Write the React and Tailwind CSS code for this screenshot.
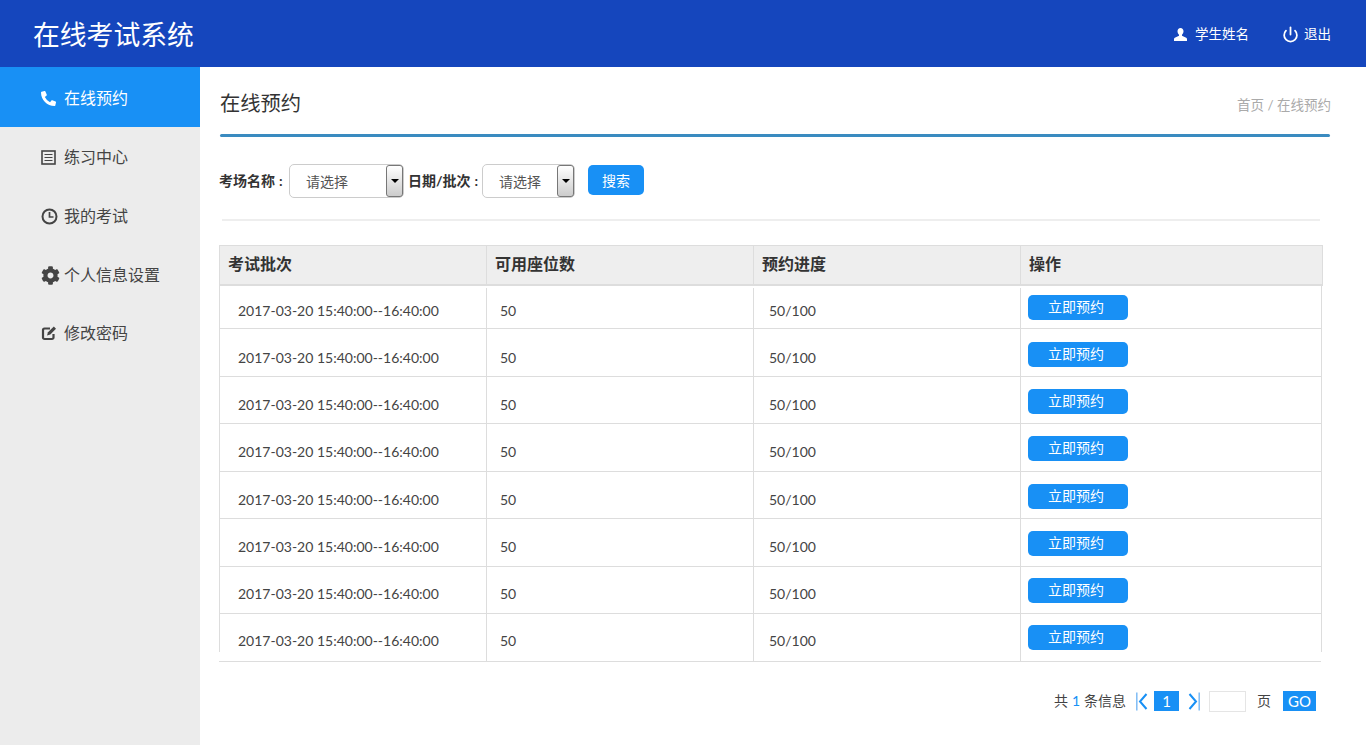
import React from "react";
import { FaCog, FaPhoneAlt } from "react-icons/fa";
import { Power } from "lucide-react";

// row heights and cell offsets follow the reference's pixel rounding
const rows = [
  { h: "h-[41px]", text: "pt-[13px]", btn: "pt-[7px]" },
  { h: "h-[48px]", text: "pt-[19px]", btn: "pt-[13px]" },
  { h: "h-[47px]", text: "pt-[18px]", btn: "pt-[12px]" },
  { h: "h-[48px]", text: "pt-[18px]", btn: "pt-[12px]" },
  { h: "h-[47px]", text: "pt-[18px]", btn: "pt-[12px]" },
  { h: "h-[48px]", text: "pt-[18px]", btn: "pt-[12px]" },
  { h: "h-[47px]", text: "pt-[17px]", btn: "pt-[11px]" },
  { h: "h-[48px]", text: "pt-[17px]", btn: "pt-[11px]" },
];

function ListIcon() {
  return (
    <svg className="shrink-0" width="15" height="15" viewBox="0 0 15 15" fill="none" stroke="#444">
      <rect x="1" y="1" width="13" height="13" strokeWidth="1.6" />
      <path d="M3.5 4.5h8M3.5 7.5h8M3.5 10.5h8" strokeWidth="1.2" />
    </svg>
  );
}

function ClockIcon() {
  return (
    <svg className="shrink-0" width="17" height="17" viewBox="0 0 17 17" fill="none" stroke="#444" strokeWidth="2">
      <circle cx="8.5" cy="8.5" r="7" />
      <path d="M8.500 4v5h4" strokeWidth="1.700" />
    </svg>
  );
}

function EditIcon() {
  return (
    <svg className="shrink-0" width="16" height="16" viewBox="0 0 16 16" fill="none">
      <path d="M12.500 9v3.500a1.500 1.500 0 0 1-1.500 1.500H3.500A1.500 1.500 0 0 1 2 12.500V5a1.500 1.500 0 0 1 1.500-1.500H9" stroke="#444" strokeWidth="2.200" />
      <path d="M6 10.500l1-3.300L12.800 1.500 15 3.700 9.300 9.500z" fill="#444" />
    </svg>
  );
}

function UserIcon() {
  return (
    <svg className="shrink-0" width="13" height="13" viewBox="0 0 13 13" fill="white">
      <path d="M6.500 0C4.700 0 3.500 1.400 3.500 3.300c0 1.500.7 2.800 1.500 3.500v1L.8 9.800C.3 10.100 0 10.600 0 11.200V13h13v-1.800c0-.6-.3-1.100-.8-1.400L8 7.800v-1c.8-.7 1.500-2 1.500-3.500C9.500 1.400 8.300 0 6.500 0z" />
    </svg>
  );
}

function NavItem({ icon, label, active, className }) {
  return (
    <div className={`flex items-center pl-[41px] gap-[8px] text-[16px] ${active ? "h-[60px] bg-[#1890f5] pt-[2px] text-white" : "text-[#444]"} ${className || ""}`}>
      <span className="flex w-[15px] justify-start">{icon}</span>
      <span>{label}</span>
    </div>
  );
}

function Select({ width, textWidth }) {
  return (
    <div className={`flex h-[34px] items-stretch rounded-[5px] border border-[#ccc] bg-white ${width}`}>
      <span className={`flex items-center pl-[16px] text-[14px] text-[#555] ${textWidth}`}>请选择</span>
      <span className="flex w-[17px] items-center justify-center rounded-[3px] border border-[#777] bg-gradient-to-b from-white to-[#ccc]">
        <span className="h-0 w-0 border-x-[4px] border-t-[4px] border-x-transparent border-t-black" />
      </span>
    </div>
  );
}

function Row({ row }) {
  return (
    <div className={`-ml-px grid grid-cols-[267px_267px_267px_1fr] border-b border-[#ddd] pl-px text-[14px] leading-[20px] text-[#444] ${row.h}`}>
      <div className={`border-r border-[#ddd] pl-[18px] ${row.text}`}>2017-03-20 15:40:00--16:40:00</div>
      <div className={`border-r border-[#ddd] pl-[13px] ${row.text}`}>50</div>
      <div className={`border-r border-[#ddd] pl-[15px] ${row.text}`}>50/100</div>
      <div className={`pl-[7px] ${row.btn}`}>
        <button className="h-[25px] w-[100px] rounded-[5px] bg-[#1890f5] pr-[4px] pb-[2px] text-[14px] text-white">立即预约</button>
      </div>
    </div>
  );
}

export default function App() {
  return (
    <div className="flex h-[745px] flex-col overflow-hidden bg-white font-['Lato','Noto_Sans_CJK_SC',sans-serif] text-[#333]">
      <header className="flex h-[67px] items-center justify-between bg-[#1546bd] pl-[33px] pr-[35px] text-white">
        <div className="mt-[4px] text-[26.8px]">在线考试系统</div>
        <div className="flex items-center pt-[2px] text-[13.5px]">
          <UserIcon />
          <span className="ml-[8px]">学生姓名</span>
          <Power className="ml-[33px]" size={17} strokeWidth={2.5} />
          <span className="ml-[5px]">退出</span>
        </div>
      </header>

      <div className="flex flex-1">
        <aside className="w-[200px] bg-[#ececec]">
          <NavItem active icon={<FaPhoneAlt className="text-[15px]" />} label="在线预约" />
          <NavItem className="mt-[19px] h-[22px]" icon={<ListIcon />} label="练习中心" />
          <NavItem className="mt-[37px] h-[22px]" icon={<ClockIcon />} label="我的考试" />
          <NavItem className="mt-[37px] h-[22px]" icon={<FaCog className="shrink-0 text-[19px] text-[#444]" />} label="个人信息设置" />
          <NavItem className="mt-[36px] h-[22px]" icon={<EditIcon />} label="修改密码" />
        </aside>

        <main className="flex-1 pl-[19px]">
          <div className="ml-px flex h-[67px] w-[1111px] items-start justify-between">
            <h1 className="mt-[22px] text-[20.300px] leading-[28px] text-[#333]">在线预约</h1>
            <div className="mt-[28px] text-[13.5px] leading-[20px] text-[#aaa]">首页 / 在线预约</div>
          </div>
          <div className="ml-px h-[3px] w-[1110px] rounded-[2px] bg-[#3a8bc0]" />

          <div className="mt-[27px] flex h-[34px] items-start">
            <label className="flex w-[70px] pt-[7px] text-[14px] leading-[20px] font-bold whitespace-nowrap">
              考场名称<span className="ml-[4px]">:</span>
            </label>
            <Select width="w-[115px]" textWidth="w-[97px]" />
            <label className="ml-[4px] flex w-[74px] pt-[7px] text-[14px] leading-[20px] font-bold whitespace-nowrap">
              日期/批次<span className="ml-[4px]">:</span>
            </label>
            <Select width="w-[93px]" textWidth="w-[75px]" />
            <button className="mt-px ml-[13px] h-[30px] w-[56px] rounded-[5px] bg-[#1890f5] text-[14px] text-white">搜索</button>
          </div>

          <div className="mt-[21px] ml-[3px] h-[2px] w-[1098px] bg-[#eee]" />

          <div className="mt-[24px] grid h-[41px] w-[1104px] grid-cols-[267px_267px_267px_1fr] border border-b-2 border-[#ddd] bg-[#eee] text-[16px] font-bold text-[#333]">
            <div className="flex items-center border-r border-[#ddd] pb-[2px] pl-[8px]">考试批次</div>
            <div className="flex items-center border-r border-[#ddd] pb-[2px] pl-[8px]">可用座位数</div>
            <div className="flex items-center border-r border-[#ddd] pb-[2px] pl-[8px]">预约进度</div>
            <div className="flex items-center pb-[2px] pl-[8px]">操作</div>
          </div>

          <div className="h-[366px] w-[1103px] border-x border-[#ddd] pt-[2px]">
            {rows.map((row, i) => (
              <Row key={i} row={row} />
            ))}
          </div>

          <div className="mt-[39px] flex h-[21px] w-[1097px] items-start justify-end text-[14px] leading-[20px] text-[#444]">
            <span>共</span>
            <span className="mx-[4px] text-[#1890f5]">1</span>
            <span>条信息</span>
            <svg className="ml-[10px]" width="12" height="20" viewBox="0 0 12 20" fill="none" stroke="#1890f5">
              <path d="M.8 1.500v18" stroke="#7fbcf5" strokeWidth="1.500" />
              <path d="M10.500 3L4 10.500l6.500 7.500" strokeWidth="2" />
            </svg>
            <span className="ml-[6px] flex h-[20px] w-[25px] items-center justify-center bg-[#1890f5] text-[15px] text-white">1</span>
            <svg className="ml-[9px]" width="12" height="20" viewBox="0 0 12 20" fill="none" stroke="#1890f5">
              <path d="M1.500 3L8 10.500 1.500 18" strokeWidth="2" />
              <path d="M11.200 1.500v18" stroke="#7fbcf5" strokeWidth="1.500" />
            </svg>
            <span className="ml-[9px] h-[21px] w-[37px] border border-[#e5e5e5] bg-white" />
            <span className="ml-[11px]">页</span>
            <span className="ml-[12px] flex h-[20px] w-[33px] items-center justify-center bg-[#1890f5] text-[15px] text-white">GO</span>
          </div>
        </main>
      </div>
    </div>
  );
}
